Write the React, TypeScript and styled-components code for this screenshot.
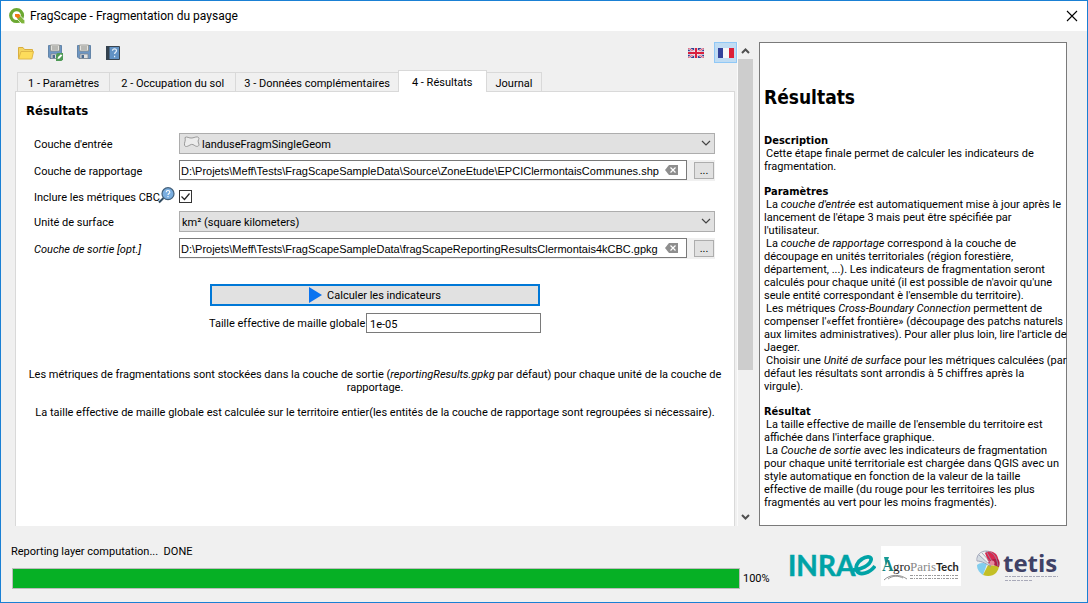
import React from "react";
import styled, { createGlobalStyle, css } from "styled-components";

const GlobalStyle = createGlobalStyle`
  *, *::before, *::after { box-sizing: border-box; }
  body { margin: 0; background: #f0f0f0; }
  button, input, select { font: inherit; color: inherit; margin: 0; }
`;

const uiFont = `Roboto, "Liberation Sans", sans-serif`;
const pathFont = `"Liberation Sans", Arial, sans-serif`;
const boldFont = `"DejaVu Sans Condensed", "DejaVu Sans", sans-serif`;

const Window = styled.div`
  display: flex;
  flex-direction: column;
  min-height: 100vh;
  border: 1px solid #1a80d4;
  background: #f0f0f0;
  color: #000;
  font: 11px/13px ${uiFont};
`;

const TitleBar = styled.header`
  display: flex;
  align-items: center;
  gap: 5px;
  height: 30px;
  padding: 0 8px;
  background: #fff;
`;

const WindowTitle = styled.h1`
  flex: 1;
  margin: 0;
  font-size: 12px;
  font-weight: 400;
`;

const BareButton = styled.button`
  display: flex;
  align-items: center;
  justify-content: center;
  padding: 0;
  border: 0;
  background: none;
`;

const Body = styled.main`
  display: flex;
  flex: 1;
  padding: 11px 20px 0 14px;
`;

const Workspace = styled.section`
  display: flex;
  flex: 1;
  flex-direction: column;
  min-width: 0;
`;

const Toolbar = styled.div`
  display: flex;
  align-items: center;
  gap: 11px;
  height: 21px;
  padding-left: 2px;
`;

const ToolButton = styled(BareButton)`
  width: 18px;
  height: 18px;
`;

const Flags = styled.div`
  display: flex;
  gap: 7px;
  margin-left: auto;
`;

const FlagButton = styled(BareButton)<{ $on?: boolean }>`
  width: 23px;
  height: 21px;
  border: 1px solid ${(p) => (p.$on ? "#90c8f6" : "transparent")};
  background: ${(p) => (p.$on ? "#c0dcf3" : "none")};
`;

const TabBar = styled.div`
  display: flex;
  align-items: flex-end;
  height: 28px;
  padding-left: 2px;
`;

const Tab = styled.button<{ $active?: boolean; $pad: number }>`
  height: 19px;
  padding: 2px ${(p) => p.$pad}px 0;
  border: 1px solid #d9d9d9;
  border-width: 1px 1px 0 0;
  background: #f0f0f0;
  white-space: nowrap;
  &:first-child { border-left-width: 1px; }
  ${(p) =>
    p.$active &&
    css`
      position: relative;
      height: 22px;
      margin: 0 0 -1px -1px;
      border-left-width: 1px;
      background: #fff;
    `}
`;

const TabPanel = styled.div`
  flex: 1;
  margin-right: 2px;
  padding: 12px 10px 0;
  border: 1px solid #d9d9d9;
  border-bottom: 0;
  background: #fff;
`;

const PanelTitle = styled.h2`
  margin: 0 0 15px;
  font: 700 13px/14px ${boldFont};
`;

const Form = styled.form`
  display: grid;
  grid-template-columns: 145px 1fr;
  row-gap: 6px;
  padding: 0 9px 0 8px;
`;

const Label = styled.label<{ $optional?: boolean }>`
  display: flex;
  align-items: center;
  padding-top: 2px;
  white-space: nowrap;
  font-style: ${(p) => (p.$optional ? "italic" : "normal")};
`;

const SelectBox = styled.div`
  position: relative;
  height: 21px;
`;

const Select = styled.select<{ $withIcon?: boolean }>`
  appearance: none;
  width: 100%;
  height: 100%;
  padding: 2px 24px 0 ${(p) => (p.$withIcon ? 22 : 2)}px;
  border: 1px solid #adadad;
  border-radius: 0;
  background: #e1e1e1;
`;

const Chevron = styled.svg`
  position: absolute;
  top: 7px;
  right: 4px;
  pointer-events: none;
`;

const LayerIcon = styled.svg`
  position: absolute;
  top: 2px;
  left: 4px;
  pointer-events: none;
`;

const PathRow = styled.div`
  display: flex;
  align-items: center;
  height: 21px;
  padding-right: 1px;
  background: #f0f0f0;
`;

const InputFrame = styled.div`
  display: flex;
  flex: 1;
  align-items: center;
  align-self: flex-start;
  height: 20px;
  margin-right: 7px;
  padding-right: 8px;
  border: 1px solid #7a7a7a;
  background: #fff;
`;

const PathInput = styled.input`
  flex: 1;
  min-width: 0;
  height: 18px;
  padding: 2px 0 0 1px;
  border: 0;
  outline: 0;
  background: none;
  font-family: ${pathFont};
`;

const BrowseButton = styled.button`
  width: 20px;
  height: 17px;
  padding: 0;
  border: 1px solid #adadad;
  background: #e1e1e1;
  line-height: 11px;
`;

const CheckRow = styled.div`
  position: relative;
  display: flex;
  align-items: center;
  height: 18px;
`;

const CheckBox = styled.input`
  appearance: none;
  width: 13px;
  height: 13px;
  margin: 0;
  border: 1px solid #333;
  background: #fff;
`;

const CheckMark = styled.svg`
  position: absolute;
  left: 0;
  pointer-events: none;
`;

const Actions = styled.div`
  display: flex;
  flex-direction: column;
  gap: 7px;
  width: 332px;
  margin: 25px auto 0;
`;

const RunButton = styled.button`
  display: flex;
  align-items: center;
  justify-content: center;
  gap: 5px;
  height: 22px;
  margin: 0 1px;
  padding: 0;
  border: 2px solid #0078d7;
  background: #e1e1e1;
`;

const ResultRow = styled.div`
  display: flex;
  align-items: center;
  justify-content: space-between;
  white-space: nowrap;
`;

const ResultInput = styled.input`
  width: 175px;
  height: 20px;
  padding: 2px 3px 0;
  border: 1px solid #7a7a7a;
  background: #fff;
`;

const Notes = styled.div`
  margin-top: 35px;
  text-align: center;
  p { margin: 0 0 12px; }
`;

const ScrollBar = styled.div`
  display: flex;
  flex-direction: column;
  width: 16px;
  margin-right: 6px;
  border-left: 1px solid #fafafa;
`;

const ScrollArrow = styled(BareButton)`
  height: 17px;
`;

const ScrollTrack = styled.div`
  flex: 1;
`;

const ScrollThumb = styled.div`
  height: 69%;
  background: #cdcdcd;
`;

const Help = styled.aside`
  width: 308px;
  padding: 44px 4px 0;
  border: 1px solid #7a7a7a;
  background: #fff;
`;

const HelpTitle = styled.h2`
  margin: 0 0 26px;
  font: 700 19px/21px ${boldFont};
`;

const HelpSection = styled.section`
  margin-bottom: 12px;
  h3 { margin: 0; font: 700 11px/13px ${boldFont}; }
  p { margin: 0; text-indent: 2px; white-space: nowrap; }
`;

const Footer = styled.footer`
  display: flex;
  align-items: flex-start;
  height: 76px;
  padding: 19px 26px 0 10px;
`;

const Status = styled.div`
  flex: 1;
  margin-right: 17px;
`;

const StatusText = styled.p`
  margin: 0 0 10px;
  white-space: pre;
`;

const ProgressRow = styled.div`
  display: flex;
  align-items: center;
  gap: 3px;
  padding-left: 1px;
`;

const ProgressTrack = styled.div`
  flex: 1;
  height: 21px;
  border: 1px solid #bcbcbc;
  background: #e6e6e6;
`;

const ProgressFill = styled.div`
  height: 100%;
  background: #06b025;
`;

const Percent = styled.output`
  width: 29px;
  white-space: nowrap;
`;

const Logos = styled.div`
  display: flex;
  align-items: center;
  height: 42px;
`;

const AgroMark = styled.svg`
  margin: 0 14px 0 5px;
`;

const QgisIcon = () => (
  <svg width="16" height="16" viewBox="0 0 16 16" aria-hidden="true">
    <circle cx="7.6" cy="7.6" r="5.9" fill="none" stroke="#6ba832" strokeWidth="3.2" />
    <path d="M8 8h3.6l4.2 4.6v3.2h-3L8 11z" fill="#7fb53c" stroke="#fff" strokeWidth=".7" />
    <path d="M6 6h4l1.6 1.800-2.400 2.600L6 8.600z" fill="#ee7913" />
  </svg>
);

const FolderIcon = () => (
  <svg width="18" height="16" viewBox="0 0 18 16" aria-hidden="true">
    <path d="M1.500 14V2.500H6l1.500 2h8V7" fill="#f5d560" stroke="#d9ae3f" />
    <path d="M1.500 14 4 6.500h12.500L14.800 14z" fill="#fddc5b" stroke="#e0b848" />
  </svg>
);

const FloppyIcon = ({ edit }: { edit?: boolean }) => (
  <svg width="17" height="17" viewBox="0 0 17 17" aria-hidden="true">
    <path d="M1.500 1.500h13v13H3l-1.500-1.500z" fill="#6d96c3" stroke="#6485a8" />
    <path d="M3.500 1h9v6h-9z" fill="#e4e4e0" stroke="#8b8b86" strokeWidth=".8" />
    <path d="M5 3h6M5 5h6" stroke="#8d8d88" />
    <path d="M4 10h8v4.500H4z" fill="#dfe1e2" stroke="#7d8791" strokeWidth=".8" />
    <path d="M5.500 11H8v3H5.500z" fill="#4a6a90" />
    {edit && (
      <>
        <path d="M9 10.500 10.500 9H16v6.500L14.500 17H9z" fill="#4f9a57" />
        <path d="M10.500 15l.6-2 2.800-2.800 1.400 1.400-2.800 2.800z" fill="#fff" />
      </>
    )}
  </svg>
);

const ManualIcon = () => (
  <svg width="16" height="16" viewBox="0 0 16 16" aria-hidden="true">
    <path d="M1.500 1.500h13v13h-13z" fill="#6292c4" stroke="#39444f" />
    <path d="M1 1h3.500v14H1z" fill="#33414e" />
    <path d="M7.500 5.800c0-2.600 4-2.400 4 0 0 1.500-1.900 1.500-1.900 3.200M9.600 10.800v1.400" fill="none" stroke="#e4eef8" strokeWidth="1.200" />
  </svg>
);

const UkFlag = () => (
  <svg width="16" height="10" viewBox="0 0 16 10" aria-hidden="true">
    <path d="M0 0h16v10H0z" fill="#33408f" />
    <path d="M0 0l16 10M16 0 0 10" stroke="#f1e6ee" strokeWidth="2.200" />
    <path d="M0 0l16 10M16 0 0 10" stroke="#d8304c" strokeWidth=".8" />
    <path d="M8 0v10M0 5h16" stroke="#f6eef2" strokeWidth="3.600" />
    <path d="M8 0v10M0 5h16" stroke="#d81f3e" strokeWidth="2" />
  </svg>
);

const FrFlag = () => (
  <svg width="16" height="10" viewBox="0 0 16 10" aria-hidden="true">
    <path d="M0 0h5v10H0z" fill="#33439b" />
    <path d="M5 0h6v10H5z" fill="#f7f7f7" />
    <path d="M11 0h5v10h-5z" fill="#dc2038" />
  </svg>
);

const LensSvg = styled.svg`
  flex: none;
  align-self: flex-start;
  margin: -2px 0 0 -2px;
`;

const HelpLens = () => (
  <LensSvg width="17" height="17" viewBox="0 0 17 17" aria-hidden="true">
    <path d="M1 15.500l4.500-4.500" stroke="#2f4a60" strokeWidth="2" />
    <circle cx="10" cy="6.700" r="6" fill="#7aaee0" stroke="#44617b" strokeWidth="1.200" />
    <path d="M8.200 5.200c0-2.200 3.600-2.200 3.600 0 0 1.300-1.800 1.300-1.800 2.700M10 9v1.200" fill="none" stroke="#fff" strokeWidth="1.100" />
  </LensSvg>
);

const DownChevron = () => (
  <Chevron width="10" height="7" viewBox="0 0 10 7" aria-hidden="true">
    <path d="M1 1l4 4 4-4" fill="none" stroke="#444" strokeWidth="1.200" />
  </Chevron>
);

const ClearIcon = () => (
  <svg width="13" height="10" viewBox="0 0 13 10" aria-hidden="true">
    <path d="M4 0h9v10H4L0 5z" fill="#8e8e8e" />
    <path d="M5.500 2.500l5 5M10.500 2.500l-5 5" stroke="#fff" strokeWidth="1.200" />
  </svg>
);

const ArrowIcon = ({ down }: { down?: boolean }) => (
  <svg width="9" height="7" viewBox="0 0 9 7" aria-hidden="true">
    <path d={down ? "M1 1l3.500 3.500L8 1" : "M1 6l3.500-3.500L8 6"} fill="none" stroke="#505050" strokeWidth="2" />
  </svg>
);

const InraeLogo = () => (
  <svg width="87" height="42" viewBox="0 -6 87 42" role="img" aria-label="INRAE">
    <text x="-1" y="25" fill="#00a3a6" stroke="#00a3a6" strokeWidth=".5" fontFamily="Lato, sans-serif" fontWeight="700" fontSize="28">INRA</text>
    <path d="M64 19c8 0 17-5 18-10 1-4-5-4-9-1-5 3-7 8-5 12 3 5 13 2 18-5" fill="none" stroke="#00a3a6" strokeWidth="3.800" />
  </svg>
);

const AgroLogo = () => (
  <AgroMark width="80" height="40" viewBox="0 0 80 40" role="img" aria-label="AgroParisTech">
    <path d="M0 0h80v40H0z" fill="#fff" />
    <path d="M3 11h5L5 20z" fill="#159a94" />
    <text x="1" y="25" fontFamily="Liberation Serif, serif" fontWeight="700" fontSize="16" fill="#17857f">A</text>
    <text x="12" y="25" fontFamily="Liberation Serif, serif" fontSize="13" fill="#222">gro</text>
    <text x="29" y="25" fontFamily="Liberation Serif, serif" fontSize="13" fill="#888">Paris</text>
    <text x="55" y="25" fontFamily="Lato, sans-serif" fontWeight="700" fontSize="11" fill="#222">Tech</text>
    <path d="M3 34c6-6 16-6 23-1M7 33c5-4 11-3 15-1" fill="none" stroke="#777" strokeWidth=".8" />
    <path d="M29 29.500h49M29 32.500h49" stroke="#999" strokeDasharray="3 1 1 1 2 1" />
  </AgroMark>
);

const TetisLogo = () => (
  <svg width="86" height="42" viewBox="0 -4 86 42" role="img" aria-label="tetis">
    <path d="M12 14 4 5C2 7 2 11 4 13z" fill="#d3dbe2" />
    <path d="M13 12 10 4c3-3 8-2 11 1 3 4 3 8 1 12z" fill="#d8284f" />
    <path d="M12 15C8 13 4 14 2 16c0 5 3 8 6 10z" fill="#82cdee" />
    <path d="M13 16 8 26c5 2 10 1 13-2 2-3 3-5 3-7z" fill="#c3bf26" />
    <path d="M13 14l11 4c1-3 1-6-1-8-4-1-8 1-10 4z" fill="#b01c46" />
    <g fill="none" stroke="#8f95ad" strokeWidth=".8">
      <path d="M2 12C1 6 6 2 11 2c7 0 11 6 12 15M4 6l12 11M7 4l11 12M11 2l8 14M2 12c5 0 10 3 14 6" />
    </g>
    <circle cx="17" cy="14" r="2.500" fill="#e58b9f" />
    <text x="28" y="23" fontFamily="Open Sans, sans-serif" fontWeight="700" fontSize="24" fill="#3f4166">tetis</text>
    <path d="M30 27.500h53M30 31.500h28" stroke="#a9aab9" strokeDasharray="3 1 2 1 4 1" />
  </svg>
);

const PathField = ({ id, value }: { id: string; value: string }) => (
  <PathRow>
    <InputFrame>
      <PathInput id={id} defaultValue={value} />
      <BareButton type="button" aria-label="Effacer"><ClearIcon /></BareButton>
    </InputFrame>
    <BrowseButton type="button">...</BrowseButton>
  </PathRow>
);

export default function App() {
  return (
    <>
      <GlobalStyle />
      <Window>
        <TitleBar>
          <QgisIcon />
          <WindowTitle>FragScape - Fragmentation du paysage</WindowTitle>
          <BareButton aria-label="Fermer">
            <svg width="16" height="12" viewBox="0 0 16 12"><path d="M4 1l10 10M14 1 4 11" stroke="#000" strokeWidth="1.100" /></svg>
          </BareButton>
        </TitleBar>

        <Body>
          <Workspace>
            <Toolbar>
              <ToolButton aria-label="Ouvrir"><FolderIcon /></ToolButton>
              <ToolButton aria-label="Enregistrer sous"><FloppyIcon edit /></ToolButton>
              <ToolButton aria-label="Enregistrer"><FloppyIcon /></ToolButton>
              <ToolButton aria-label="Aide"><ManualIcon /></ToolButton>
              <Flags>
                <FlagButton aria-label="English"><UkFlag /></FlagButton>
                <FlagButton $on aria-label="Français"><FrFlag /></FlagButton>
              </Flags>
            </Toolbar>
            <TabBar role="tablist">
              <Tab role="tab" $pad={10}>1 - Paramètres</Tab>
              <Tab role="tab" $pad={11}>2 - Occupation du sol</Tab>
              <Tab role="tab" $pad={8}>3 - Données complémentaires</Tab>
              <Tab role="tab" $pad={13} $active aria-selected>4 - Résultats</Tab>
              <Tab role="tab" $pad={9}>Journal</Tab>
            </TabBar>
            <TabPanel role="tabpanel">
              <PanelTitle>Résultats</PanelTitle>
              <Form>
                <Label htmlFor="entree">Couche d'entrée</Label>
                <SelectBox>
                  <Select id="entree" $withIcon><option>landuseFragmSingleGeom</option></Select>
                  <LayerIcon width="17" height="14" viewBox="0 0 17 14" aria-hidden="true">
                    <path d="M2 2.500C4 1 6 3.500 9 3s5-2 6.500-.5S14 5 15.500 8s-1 4-3 3-3-2.500-5.500-1-5 2.500-5.500 0S3 6 2 2.500z" fill="#ececec" stroke="#999" />
                  </LayerIcon>
                  <DownChevron />
                </SelectBox>

                <Label htmlFor="rapportage">Couche de rapportage</Label>
                <PathField id="rapportage" value="D:\Projets\Meff\Tests\FragScapeSampleData\Source\ZoneEtude\EPCIClermontaisCommunes.shp" />

                <Label htmlFor="cbc">Inclure les métriques CBC<HelpLens /></Label>
                <CheckRow>
                  <CheckBox id="cbc" type="checkbox" defaultChecked />
                  <CheckMark width="13" height="13" viewBox="0 0 13 13" aria-hidden="true">
                    <path d="M2.500 6.500l3 3 5-6" fill="none" stroke="#222" strokeWidth="1.200" />
                  </CheckMark>
                </CheckRow>

                <Label htmlFor="unite">Unité de surface</Label>
                <SelectBox>
                  <Select id="unite"><option>km² (square kilometers)</option></Select>
                  <DownChevron />
                </SelectBox>

                <Label htmlFor="sortie" $optional>Couche de sortie [opt.]</Label>
                <PathField id="sortie" value="D:\Projets\Meff\Tests\FragScapeSampleData\fragScapeReportingResultsClermontais4kCBC.gpkg" />
              </Form>
              <Actions>
                <RunButton type="button">
                  <svg width="13" height="16" viewBox="0 0 13 16" aria-hidden="true"><path d="M0 0l13 8-13 8z" fill="#0a74f0" /></svg>
                  Calculer les indicateurs
                </RunButton>
                <ResultRow>
                  <label htmlFor="maille">Taille effective de maille globale</label>
                  <ResultInput id="maille" defaultValue="1e-05" />
                </ResultRow>
              </Actions>
              <Notes>
                <p>Les métriques de fragmentations sont stockées dans la couche de sortie (<em>reportingResults.gpkg</em> par défaut) pour chaque unité de la couche de rapportage.</p>
                <p>La taille effective de maille globale est calculée sur le territoire entier(les entités de la couche de rapportage sont regroupées si nécessaire).</p>
              </Notes>
            </TabPanel>
          </Workspace>

          <ScrollBar>
            <ScrollArrow aria-label="Défiler vers le haut"><ArrowIcon /></ScrollArrow>
            <ScrollTrack><ScrollThumb /></ScrollTrack>
            <ScrollArrow aria-label="Défiler vers le bas"><ArrowIcon down /></ScrollArrow>
          </ScrollBar>

          <Help>
            <HelpTitle>Résultats</HelpTitle>
            <HelpSection>
              <h3>Description</h3>
              <p>Cette étape finale permet de calculer les indicateurs de<br />fragmentation.</p>
            </HelpSection>
            <HelpSection>
              <h3>Paramètres</h3>
              <p>La <em>couche d'entrée</em> est automatiquement mise à jour après le<br />lancement de l'étape 3 mais peut être spécifiée par<br />l'utilisateur.</p>
              <p>La <em>couche de rapportage</em> correspond à la couche de<br />découpage en unités territoriales (région forestière,<br />département, ...). Les indicateurs de fragmentation seront<br />calculés pour chaque unité (il est possible de n'avoir qu'une<br />seule entité correspondant è l'ensemble du territoire).</p>
              <p>Les métriques <em>Cross-Boundary Connection</em> permettent de<br />compenser l'«effet frontière» (découpage des patchs naturels<br />aux limites administratives). Pour aller plus loin, lire l'article de<br />Jaeger.</p>
              <p>Choisir une <em>Unité de surface</em> pour les métriques calculées (par<br />défaut les résultats sont arrondis à 5 chiffres après la<br />virgule).</p>
            </HelpSection>
            <HelpSection>
              <h3>Résultat</h3>
              <p>La taille effective de maille de l'ensemble du territoire est<br />affichée dans l'interface graphique.</p>
              <p>La <em>Couche de sortie</em> avec les indicateurs de fragmentation<br />pour chaque unité territoriale est chargée dans QGIS avec un<br />style automatique en fonction de la valeur de la taille<br />effective de maille (du rouge pour les territoires les plus<br />fragmentés au vert pour les moins fragmentés).</p>
            </HelpSection>
          </Help>
        </Body>

        <Footer>
          <Status>
            <StatusText>{"Reporting layer computation...  DONE"}</StatusText>
            <ProgressRow>
              <ProgressTrack role="progressbar" aria-valuenow={100}><ProgressFill /></ProgressTrack>
              <Percent>100%</Percent>
            </ProgressRow>
          </Status>
          <Logos>
            <InraeLogo />
            <AgroLogo />
            <TetisLogo />
          </Logos>
        </Footer>
      </Window>
    </>
  );
}
